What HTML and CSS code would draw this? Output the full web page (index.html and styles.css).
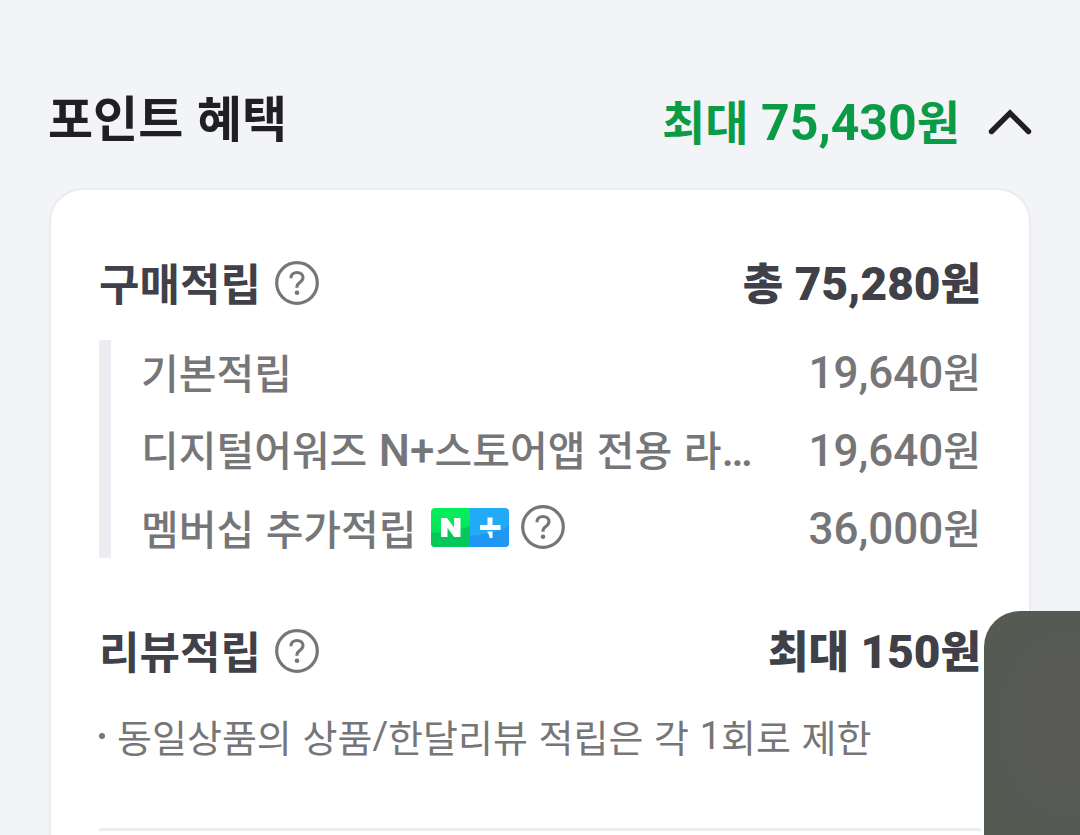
FILE: index.html
```html
<!DOCTYPE html>
<html lang="ko">
<head>
<meta charset="utf-8">
<meta name="viewport" content="width=device-width, initial-scale=1">
<title>포인트 혜택</title>
<link rel="stylesheet" href="styles.css">
</head>
<body>
<svg class="defs" aria-hidden="true">
  <symbol id="help" viewBox="0 0 44 44">
    <circle cx="22" cy="22" r="20.3" fill="none" stroke="currentColor" stroke-width="3.2"/>
    <path d="M16 17.3v-.6c0-3.2 2.5-5.2 6-5.2s6 2.1 6 5.1c0 2.1-1 3.4-3.2 4.9-2 1.4-2.8 2.3-2.8 4.2v1" fill="none" stroke="currentColor" stroke-width="3.1"/>
    <circle cx="22" cy="31.7" r="2.3" fill="currentColor"/>
  </symbol>
</svg>
<main class="page">
  <header class="head">
    <h1 class="title">포인트 혜택</h1>
    <button class="toggle" type="button" aria-expanded="true" aria-controls="benefits">
      <span>최대<span class="num"> 75,430</span>원</span>
      <svg class="chevron" viewBox="0 0 44 28" aria-hidden="true"><path d="M3.5 23.5 22 5l18.500 18.500" fill="none" stroke="currentColor" stroke-width="5.400" stroke-linecap="round"/></svg>
    </button>
  </header>
  <section class="card" id="benefits">
    <div class="row summary">
      <h2 class="label">구매적립 <button class="help" type="button" aria-label="구매적립 도움말"><svg viewBox="0 0 44 44"><use href="#help"/></svg></button></h2>
      <strong class="sum">총<span class="num"> 75,280</span>원</strong>
    </div>
    <ul class="details">
      <li class="row"><span class="name">기본적립</span><span><span class="num">19,640</span>원</span></li>
      <li class="row"><span class="name">디지털어워즈 <span class="num">N+</span>스토어앱 전용 라<span class="num">…</span></span><span><span class="num">19,640</span>원</span></li>
      <li class="row">
        <span class="label">멤버십 추가적립
          <svg class="badge" viewBox="0 0 78 39" role="img" aria-label="네이버플러스">
            <defs>
              <linearGradient id="green" x1="0" y1="0" x2="0" y2="1"><stop offset="0" stop-color="#04ef5c"/><stop offset="1" stop-color="#05dc58"/></linearGradient>
              <clipPath id="round"><rect width="78" height="39" rx="4"/></clipPath>
            </defs>
            <g clip-path="url(#round)">
              <path fill="url(#green)" d="M0 0h39v39H0z"/>
              <path fill="#22aaf7" d="M39 0h39v39H39z"/>
              <path fill="#06c75a" d="M0 25c13-1 27-2 39-7v21H0z"/>
              <path fill="#2196f3" d="M39 28c14-1 27-4 39-10v21H39z"/>
            </g>
            <path fill="#fff" d="M10 10h6l7 9.500V10h6.500v19H23l-6.500-9.500V29H10z"/>
            <path fill="#fff" d="M56.500 9.500h5V17h8v5H49v-5h7.500zM56.500 23.500h5v6.500h-3c0-2.500-.5-4-2-5z"/>
          </svg>
          <button class="help" type="button" aria-label="멤버십 추가적립 도움말"><svg viewBox="0 0 44 44"><use href="#help"/></svg></button>
        </span>
        <span><span class="num">36,000</span>원</span>
      </li>
    </ul>
    <div class="row summary">
      <h2 class="label">리뷰적립 <button class="help" type="button" aria-label="리뷰적립 도움말"><svg viewBox="0 0 44 44"><use href="#help"/></svg></button></h2>
      <strong class="sum">최대<span class="num"> 150</span>원</strong>
    </div>
    <ul class="notes">
      <li>동일상품의 상품<span class="num">/</span>한달리뷰 적립은 각 <span class="num">1</span>회로 제한</li>
    </ul>
    <hr class="rule">
  </section>
</main>
<aside class="floating" aria-hidden="true"></aside>
</body>
</html>
```
FILE: styles.css
```css
* {
  box-sizing: border-box;
  margin: 0;
  padding: 0;
}

body {
  background: #f3f4f7;
  color: #1f1f24;
  font-family: "Noto Sans CJK KR", sans-serif;
}

button {
  border: 0;
  background: none;
  color: inherit;
  font: inherit;
  cursor: pointer;
}

ul {
  list-style: none;
}

svg {
  display: block;
}

.defs {
  position: absolute;
  width: 0;
  height: 0;
}

.num {
  font-family: Roboto, sans-serif;
}

.page {
  display: flex;
  flex-direction: column;
  min-height: 100vh;
  padding: 80px 48px 0;
}

.head {
  display: flex;
  align-items: flex-start;
  justify-content: space-between;
  height: 80px;
  margin-bottom: 28px;
}

.title {
  font-size: 49px;
  font-weight: 700;
  line-height: 72px;
}

.toggle {
  display: flex;
  align-items: center;
  gap: 28px;
  color: #0b9b46;
  font-size: 47px;
  font-weight: 700;
  line-height: 80px;
}

.toggle .num {
  font-size: 50px;
}

.chevron {
  width: 44px;
  height: 28px;
  color: #1f1f24;
}

.card {
  flex: 1;
  margin: 0 1px;
  padding: 54px 48px 0;
  border: 2px solid #ebecef;
  border-bottom: 0;
  border-radius: 34px 34px 0 0;
  background: #fff;
}

.row {
  display: flex;
  align-items: center;
  justify-content: space-between;
  white-space: nowrap;
}

.label {
  display: flex;
  align-items: center;
  gap: 12px;
  font-size: inherit;
}

.summary {
  height: 76px;
  color: #404048;
  font-size: 44px;
  font-weight: 700;
  line-height: 76px;
}

.summary .label {
  gap: 14px;
}

.summary .num {
  font-size: 46px;
}

.help {
  flex: none;
  width: 44px;
  height: 44px;
  color: #767678;
}

.summary .help {
  margin-top: 2px;
}

.details {
  margin: 20px 0 54px;
  padding-left: 30px;
  border-left: 12px solid #ecedf2;
  color: #767678;
  font-size: 41px;
  font-weight: 500;
  line-height: 62px;
}

.details .row {
  height: 62px;
}

.details .row + .row {
  margin-top: 16px;
}

.details .num {
  font-size: 44px;
}

.badge {
  width: 78px;
  height: 39px;
  margin-left: 2px;
}

.notes {
  margin-top: 18px;
  color: #767678;
  font-size: 38px;
  line-height: 60px;
}

.notes li {
  display: flex;
  align-items: center;
  white-space: pre;
}

.notes li::before {
  content: "";
  flex: none;
  width: 6px;
  height: 6px;
  margin-right: 12px;
  border-radius: 50%;
  background: #767678;
}

.rule {
  height: 3px;
  margin-top: 62px;
  border: 0;
  background: #ecedf0;
}

.floating {
  position: fixed;
  right: 0;
  bottom: 0;
  width: 96px;
  height: 224px;
  border-radius: 36px 0 0 0;
  background: radial-gradient(ellipse at 90% 50%, #595957 20%, #555a53 75%);
}
```
